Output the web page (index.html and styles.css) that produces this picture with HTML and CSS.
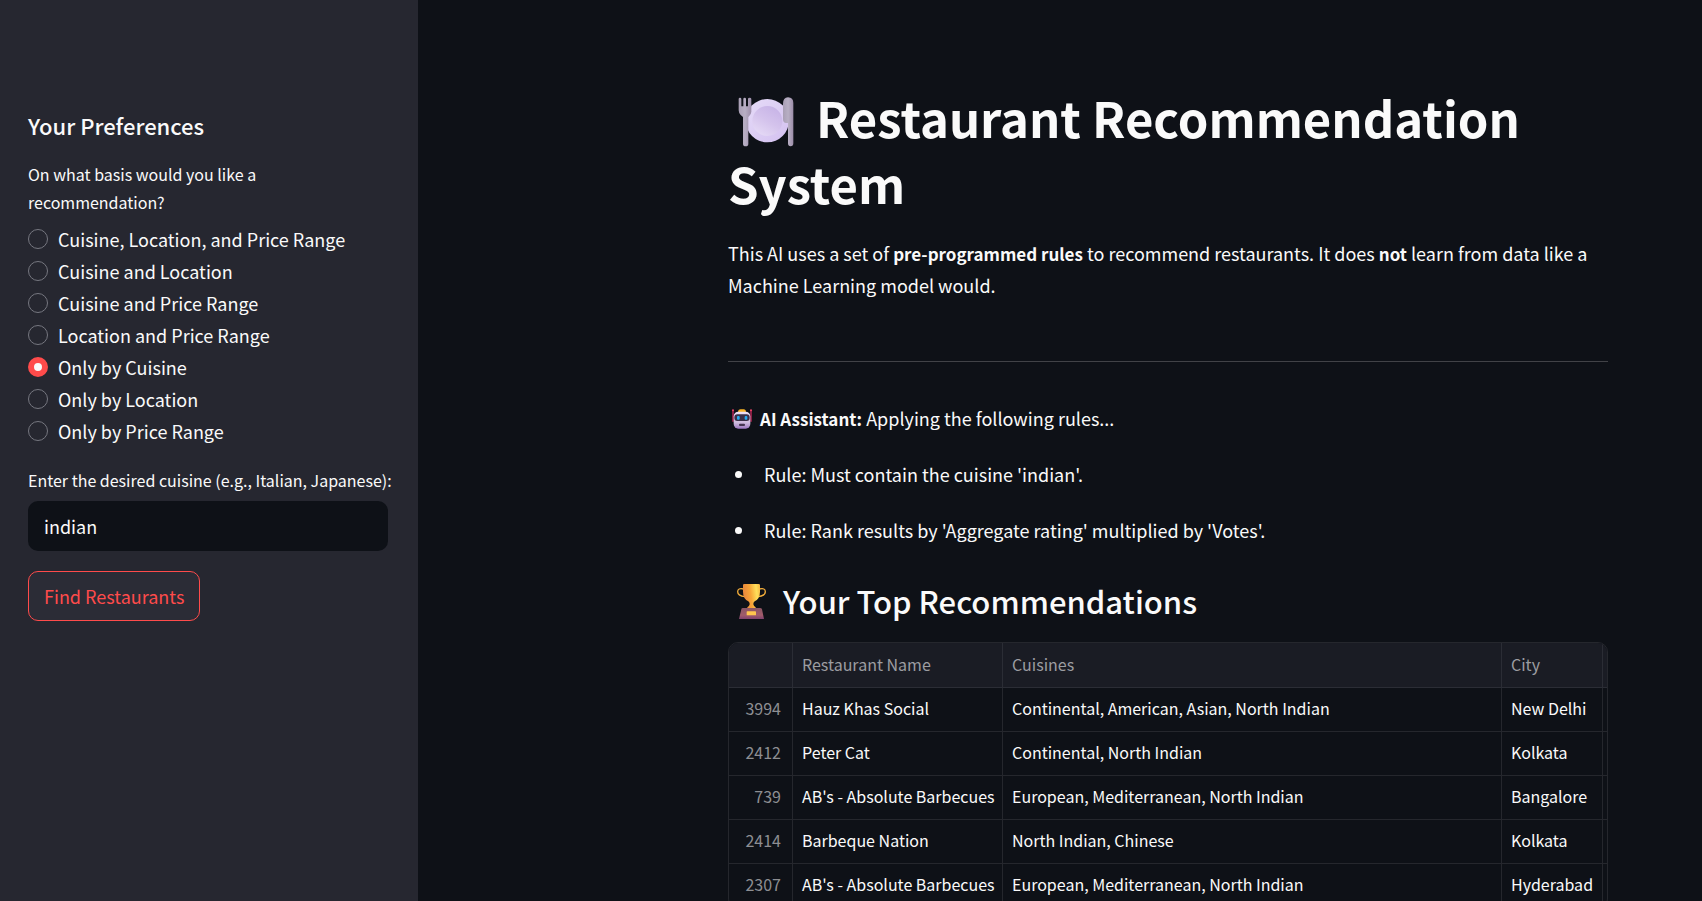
FILE: index.html
```html
<!DOCTYPE html>
<html lang="en">
<head>
<meta charset="utf-8">
<title>Restaurant Recommendation System</title>
<link rel="stylesheet" href="styles.css">
</head>
<body>
<div class="app">
  <aside class="sidebar">
    <h2 class="sidebar-title">Your Preferences</h2>
    <form class="preferences">
      <fieldset class="basis">
        <legend class="field-label">On what basis would you like a recommendation?</legend>
        <label class="option"><input class="radio" type="radio" name="basis">Cuisine, Location, and Price Range</label>
        <label class="option"><input class="radio" type="radio" name="basis">Cuisine and Location</label>
        <label class="option"><input class="radio" type="radio" name="basis">Cuisine and Price Range</label>
        <label class="option"><input class="radio" type="radio" name="basis">Location and Price Range</label>
        <label class="option"><input class="radio" type="radio" name="basis" checked>Only by Cuisine</label>
        <label class="option"><input class="radio" type="radio" name="basis">Only by Location</label>
        <label class="option"><input class="radio" type="radio" name="basis">Only by Price Range</label>
      </fieldset>
      <label class="field-label cuisine-label" for="cuisine">Enter the desired cuisine (e.g., Italian, Japanese):</label>
      <input class="text-input" id="cuisine" type="text" value="indian">
      <button class="find-button" type="button">Find Restaurants</button>
    </form>
  </aside>
  <main class="main">
    <h1 class="title"><svg class="icon-plate" viewBox="0 0 168 150" aria-hidden="true">
      <defs>
        <linearGradient id="dish" x1="0" y1="0" x2="1" y2="1"><stop offset="0" stop-color="#e6dcf8"/><stop offset="1" stop-color="#d3c0f0"/></linearGradient>
        <linearGradient id="bowl" x1="0.2" y1="1" x2="0.8" y2="0"><stop offset="0" stop-color="#e6dbf6"/><stop offset="0.5" stop-color="#d4c3ec"/><stop offset="1" stop-color="#c6b2e6"/></linearGradient>
        <linearGradient id="steel" x1="0" y1="0" x2="1" y2="0"><stop offset="0" stop-color="#a99fb5"/><stop offset="0.5" stop-color="#b8afc4"/><stop offset="1" stop-color="#9c8da9"/></linearGradient>
      </defs>
      <circle cx="88" cy="71" r="65" fill="url(#dish)"/>
      <circle cx="88" cy="72" r="45" fill="url(#bowl)"/>
      <path d="M2 6q0-4 4-4t4 4v22h6V6q0-4 4-4t4 4v22h6V6q0-4 5-4t5 4v38q0 8-8 15l-1 1v80q0 8-8 8t-8-8V60l-7-6q-6-6-6-14z" fill="url(#steel)"/>
      <path d="M150 1q16 1 16 17v121q0 9-8 9t-8-9V78h-5q-10 0-10-11V20q0-18 15-19z" fill="url(#steel)"/>
    </svg>Restaurant Recommendation System</h1>
    <p class="intro">This AI uses a set of <strong>pre-programmed rules</strong> to recommend restaurants. It does <strong>not</strong> learn from data like a Machine Learning model would.</p>
    <hr class="divider">
    <p class="assistant"><svg class="icon-robot" viewBox="0 0 60 60" aria-hidden="true">
      <defs><linearGradient id="head" x1="0" y1="0" x2="0" y2="1"><stop offset="0" stop-color="#efe2f7"/><stop offset="0.65" stop-color="#cdbbdc"/><stop offset="1" stop-color="#9c78c0"/></linearGradient></defs>
      <path d="M3 4v34M57 4v34" stroke="#c6285b" stroke-width="4"/>
      <circle cx="3" cy="4" r="3" fill="#ef4668"/><circle cx="57" cy="4" r="3" fill="#ef4668"/>
      <path d="M18 10q0-9 8-9h9q7 0 7 9z" fill="#f9b526"/>
      <rect x="5" y="8" width="50" height="51" rx="14" fill="url(#head)"/>
      <rect x="7" y="16" width="46" height="20" rx="9" fill="#393047"/>
      <rect x="15" y="21" width="8" height="11" rx="3" fill="#24a9ee"/><rect x="38" y="21" width="8" height="11" rx="3" fill="#24a9ee"/>
      <rect x="21" y="44" width="18" height="7" rx="3" fill="#453650"/>
    </svg><strong>AI Assistant:</strong> Applying the following rules...</p>
    <ul class="rules">
      <li>Rule: Must contain the cuisine 'indian'.</li>
      <li>Rule: Rank results by 'Aggregate rating' multiplied by 'Votes'.</li>
    </ul>
    <h2 class="subtitle"><svg class="icon-trophy" viewBox="0 0 87 105" aria-hidden="true">
      <defs>
        <linearGradient id="gold" x1="0" y1="0.2" x2="1" y2="0"><stop offset="0" stop-color="#e8873d"/><stop offset="0.4" stop-color="#f7a637"/><stop offset="0.75" stop-color="#ffe05b"/><stop offset="1" stop-color="#f6b23e"/></linearGradient>
        <linearGradient id="base" x1="0" y1="0" x2="0" y2="1"><stop offset="0" stop-color="#8b5563"/><stop offset="0.65" stop-color="#a05c6b"/><stop offset="1" stop-color="#80426f"/></linearGradient>
      </defs>
      <path d="M20 15q-18-4-18 8 0 12 22 15M67 15q18-4 18 8 0 12-22 15" fill="none" stroke="#f3ad3a" stroke-width="4"/>
      <path d="M18 3q0-3 4-3h43q4 0 4 3v20q0 21-16 29-5 4-4 9 1 6 7 9v4H31v-4q6-3 7-9 1-5-4-9-16-8-16-29z" fill="url(#gold)"/>
      <path d="M13 76q0-4 5-4h51q5 0 6 4l6 29H6z" fill="url(#base)"/>
      <rect x="29" y="82" width="28" height="12" rx="2" fill="#ffc64e"/>
    </svg>Your Top Recommendations</h2>
    <div class="table-frame">
      <table class="results">
        <colgroup><col class="col-index"><col class="col-name"><col class="col-cuisines"><col class="col-city"><col class="col-more"></colgroup>
        <thead><tr><th></th><th>Restaurant Name</th><th>Cuisines</th><th>City</th><th></th></tr></thead>
        <tbody>
          <tr><td>3994</td><td>Hauz Khas Social</td><td>Continental, American, Asian, North Indian</td><td>New Delhi</td><td></td></tr>
          <tr><td>2412</td><td>Peter Cat</td><td>Continental, North Indian</td><td>Kolkata</td><td></td></tr>
          <tr><td>739</td><td>AB's - Absolute Barbecues</td><td>European, Mediterranean, North Indian</td><td>Bangalore</td><td></td></tr>
          <tr><td>2414</td><td>Barbeque Nation</td><td>North Indian, Chinese</td><td>Kolkata</td><td></td></tr>
          <tr><td>2307</td><td>AB's - Absolute Barbecues</td><td>European, Mediterranean, North Indian</td><td>Hyderabad</td><td></td></tr>
        </tbody>
      </table>
    </div>
  </main>
</div>
</body>
</html>
```

FILE: styles.css
```css
* { box-sizing: border-box; }

body {
  margin: 0;
  background: #0e1117;
  color: #fafafa;
  font: 18px/32px "Noto Sans CJK SC", "Noto Sans", sans-serif;
}

h1, h2, p, ul, fieldset { margin: 0; padding: 0; border: 0; }

.app {
  display: flex;
  height: 100vh;
  overflow: hidden;
}

.sidebar {
  flex: none;
  width: 418px;
  padding: 110px 30px 0 28px;
  background: #262730;
}

.sidebar-title {
  font-size: 22px;
  line-height: 30px;
  font-weight: 500;
}

.preferences {
  display: flex;
  flex-direction: column;
  align-items: flex-start;
  margin-top: 20px;
}

.basis { width: 100%; }

.field-label {
  padding: 0;
  font-size: 16px;
  line-height: 28px;
}

.basis .field-label {
  max-width: 300px;
  margin-bottom: 7px;
}

.option {
  display: flex;
  align-items: center;
  gap: 10px;
}

.radio {
  appearance: none;
  width: 20px;
  height: 20px;
  margin: 0;
  border: 1px solid #767780;
  border-radius: 50%;
  background: #262730;
}

.radio:checked {
  border: 6px solid #ff4b4b;
  background: #fafafa;
}

.cuisine-label {
  margin-top: 19px;
  white-space: nowrap;
}

.text-input {
  width: 100%;
  height: 50px;
  margin-top: 7px;
  padding: 0 16px;
  border: 0;
  border-radius: 10px;
  background: #0e1117;
  color: inherit;
  font: inherit;
}

.find-button {
  height: 50px;
  margin-top: 20px;
  padding: 0 15px;
  border: 1px solid #ff4b4b;
  border-radius: 10px;
  background: #2b2c36;
  color: #ff4b4b;
  font: inherit;
}

.main {
  flex: 1;
  min-width: 0;
  padding: 84px 94px 0 310px;
}

.title {
  font-size: 49px;
  line-height: 66px;
  font-weight: 700;
}

.icon-plate {
  width: 56px;
  height: 50px;
  margin: 0 22px 0 10px;
  vertical-align: -9px;
}

.intro { margin-top: 21px; }

strong {
  font-size: 17px;
  line-height: 1;
  font-weight: 700;
}

.divider {
  height: 1px;
  margin: 60px 0 40px;
  border: 0;
  background: #414247;
}

.icon-robot {
  width: 20px;
  height: 20px;
  margin: 0 8px 0 4px;
  vertical-align: -3px;
}

.rules {
  display: grid;
  gap: 24px;
  margin-top: 24px;
  padding-left: 28px;
}

.rules li { padding-left: 8px; }

.subtitle {
  margin-top: 34px;
  font-size: 31px;
  line-height: 42px;
  font-weight: 500;
}

.icon-trophy {
  width: 29px;
  height: 35px;
  margin: 0 17px 0 9px;
  vertical-align: -5px;
}

.table-frame {
  margin-top: 20px;
  overflow: hidden;
  border: 1px solid #25272d;
  border-radius: 10px;
}

.results {
  width: 100%;
  table-layout: fixed;
  border-collapse: separate;
  border-spacing: 0;
  font-size: 16px;
  line-height: 24px;
}

.results th,
.results td {
  height: 44px;
  padding: 0 9px 3px;
  border-right: 1px solid #25272d;
  border-bottom: 1px solid #25272d;
  text-align: left;
  font-weight: 400;
  white-space: nowrap;
}

.results th {
  height: 45px;
  background: #1a1c24;
  border-color: #2b2d35;
  color: #9c9da1;
}

.results th:last-child,
.results td:last-child { border-right: 0; padding: 0; }

.results td:first-child {
  padding-right: 11px;
  color: #8d8e92;
  text-align: right;
}

.col-index { width: 64px; }
.col-name { width: 210px; }
.col-city { width: 101px; }
.col-more { width: 4px; }
```
